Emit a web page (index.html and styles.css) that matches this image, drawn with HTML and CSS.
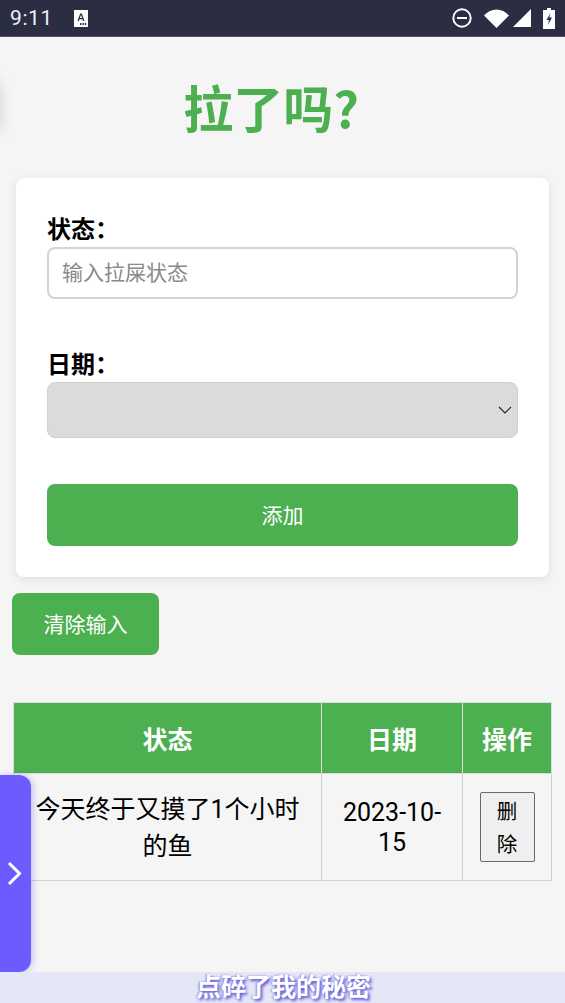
FILE: index.html
```html
<!DOCTYPE html>
<html lang="zh">
<head>
<meta charset="utf-8">
<title>拉了吗?</title>
<link rel="stylesheet" href="styles.css">
</head>
<body>
<header class="statusbar">
  <div class="status-left">
    <span class="clock">9:11</span>
    <svg class="a-icon" width="14" height="17" viewBox="0 0 14 17"><path d="M0 0h14v17H0z" fill="#fff"/><path d="M3.500 11 6.200 3.500h1.600L10.500 11H9l-.5-1.700h-3L5 11zm2.400-3h2.200L7 4.800z" fill="#2b2d42"/><path d="M6 13h1.400v2H6zm2.400 0h1.400v2H8.400zm2.400 0h1.400v2h-1.400z" fill="#2b2d42"/></svg>
  </div>
  <div class="status-right">
    <svg width="20" height="20" viewBox="0 0 20 20"><circle cx="10" cy="10" r="8.700" fill="none" stroke="#fff" stroke-width="1.900"/><path d="M5 9h10v2H5z" fill="#fff"/></svg>
    <svg class="wifi" width="25" height="19" viewBox="0 0 25 19"><path d="M0 6.500C3.500 2.600 7.800.5 12.500.5S21.500 2.600 25 6.500L12.500 19z" fill="#fff"/></svg>
    <svg class="signal" width="18" height="18" viewBox="0 0 18 18"><path d="M18 0v18H0z" fill="#fff"/></svg>
    <svg class="battery" width="12" height="21" viewBox="0 0 12 21"><path d="M4 0h4v2h4v19H0V2h4z" fill="#fff"/><path d="M7.500 5 3.500 12h2.500l-1 5 4-7.500H6.300z" fill="#2b2d42"/></svg>
  </div>
</header>

<main class="page">
  <h1 class="title">拉了吗?</h1>
  <form class="card">
    <div class="field field-status">
      <label class="label">状态：</label>
      <input class="text-input" type="text" placeholder="输入拉屎状态">
    </div>
    <div class="field field-date">
      <label class="label">日期：</label>
      <div class="select">
        <svg width="14" height="8" viewBox="0 0 14 8"><path d="M1 1l6 6 6-6" fill="none" stroke="#222" stroke-width="1.100"/></svg>
      </div>
    </div>
    <button class="primary add" type="button">添加</button>
  </form>
  <button class="primary clear" type="button">清除输入</button>

  <table class="records">
    <thead>
      <tr><th class="col-status">状态</th><th class="col-date">日期</th><th class="col-op">操作</th></tr>
    </thead>
    <tbody>
      <tr>
        <td>今天终于又摸了1个小时的鱼</td>
        <td class="date-cell">2023-10-15</td>
        <td class="op-cell"><button class="delete" type="button">删除</button></td>
      </tr>
    </tbody>
  </table>
</main>

<div class="edge-peek"></div>
<div class="side-tab">
  <svg width="15" height="25" viewBox="0 0 15 25"><path d="M2 2l10.500 10.500L2 23" fill="none" stroke="#fff" stroke-width="3"/></svg>
</div>
<div class="caption">点碎了我的秘密</div>
</body>
</html>
```
FILE: styles.css
```css
* { box-sizing: border-box; }
html, body { margin: 0; height: 1003px; overflow: hidden; }
body {
  position: relative;
  background: #f5f5f5;
  font-family: Roboto, "Noto Sans CJK SC", sans-serif;
  color: #000;
}
.statusbar {
  height: 37px;
  background: #2b2d42;
  border-bottom: 1px solid #55566a;
  display: flex;
  justify-content: space-between;
  align-items: center;
  padding: 0 10px 0 10px;
  color: #f1f1f4;
}
.status-left { display: flex; align-items: center; gap: 21px; }
.clock { font-size: 21px; letter-spacing: .6px; }
.status-right { display: flex; align-items: center; }
.wifi { margin-left: 12px; }
.signal { margin-left: 4px; }
.battery { margin-left: 12px; }

.page { padding: 0 13px; }
.title {
  margin: 0;
  padding: 36px 23px 0 0;
  height: 141px;
  text-align: center;
  color: #4caf50;
  font: 700 50px/66px "Noto Sans CJK SC", sans-serif;
}
.card {
  margin: 0 3px;
  width: 533px;
  height: 399px;
  background: #fff;
  border-radius: 8px;
  box-shadow: 0 2px 10px rgba(0,0,0,.1);
  padding: 35px 31px 0;
}
.field { display: flex; flex-direction: column; }
.field-date { margin-top: 47px; }
.label {
  font-size: 24px;
  font-weight: 700;
  line-height: 34px;
  height: 34px;
}
.field-date .label { height: 36px; line-height: 38px; }
.text-input {
  width: 471px;
  height: 52px;
  border: 2px solid #d3d3d3;
  border-radius: 8px;
  padding: 0 13px 4px;
  font: 21px "Noto Sans CJK SC", sans-serif;
  background: #fff;
  outline: none;
}
.text-input::placeholder { color: #8a8a8a; opacity: 1; }
.select {
  width: 471px;
  height: 56px;
  border: 1px solid #d0d0d0;
  border-radius: 8px;
  background: #dbdbdb;
  display: flex;
  align-items: center;
  justify-content: flex-end;
  padding-right: 5px;
}
.primary {
  background: #4caf50;
  color: #fff;
  border: 0;
  border-radius: 8px;
  font: 21px "Noto Sans CJK SC", sans-serif;
  height: 62px;
  padding: 0 0 2px;
}
.add { display: block; width: 471px; margin-top: 46px; }
.clear { display: block; width: 147px; margin: 16px 0 0 -1px; }
.records {
  margin: 47px 0 0 0;
  width: 539px;
  border-collapse: collapse;
  table-layout: fixed;
  border: 1px solid #d0d0d0;
}
.records th, .records td {
  border: 1px solid #d0d0d0;
  text-align: center;
  padding: 0;
}
.records th {
  height: 71px;
  background: #4caf50;
  color: #fff;
  font-size: 25px;
  font-weight: 700;
  border-color: #dcdcdc;
}
.col-status { width: 308px; }
.col-date { width: 141px; }
.records td {
  height: 107px;
  font-size: 25px;
  line-height: 37px;
  padding: 1px 16px 0;
}
.records .date-cell { line-height: 30px; padding: 1px 20px 0; }
.records .op-cell { padding: 0; }
.delete {
  width: 55px;
  height: 70px;
  padding: 0 12px;
  background: #efefef;
  border: 1.500px solid #696969;
  border-radius: 2px;
  font: 20.500px/33px "Noto Sans CJK SC", sans-serif;
  color: #000;
  display: block;
  margin: 0 auto;
}

.edge-peek {
  position: absolute;
  left: -14px;
  top: 82px;
  width: 12px;
  height: 50px;
  border-radius: 8px;
  box-shadow: 0 0 16px rgba(0,0,0,.2);
}
.side-tab {
  position: absolute;
  left: 0;
  top: 775px;
  width: 31px;
  height: 197px;
  background: #6c5cff;
  border-radius: 0 12px 12px 0;
  box-shadow: 2px 0 6px rgba(108,92,255,.35);
  display: flex;
  align-items: center;
  padding: 0 0 0 7px;
}
.caption {
  position: absolute;
  left: 0;
  right: 0;
  top: 972px;
  height: 31px;
  background: #e4e7f5;
  color: #fff;
  text-align: center;
  font: 700 25px/26px "Noto Sans CJK SC", sans-serif;
  padding-left: 2px;
  text-shadow: 2px 2px 3px #5a55d8, -1px 0 2px #8a86e8;
}
```
